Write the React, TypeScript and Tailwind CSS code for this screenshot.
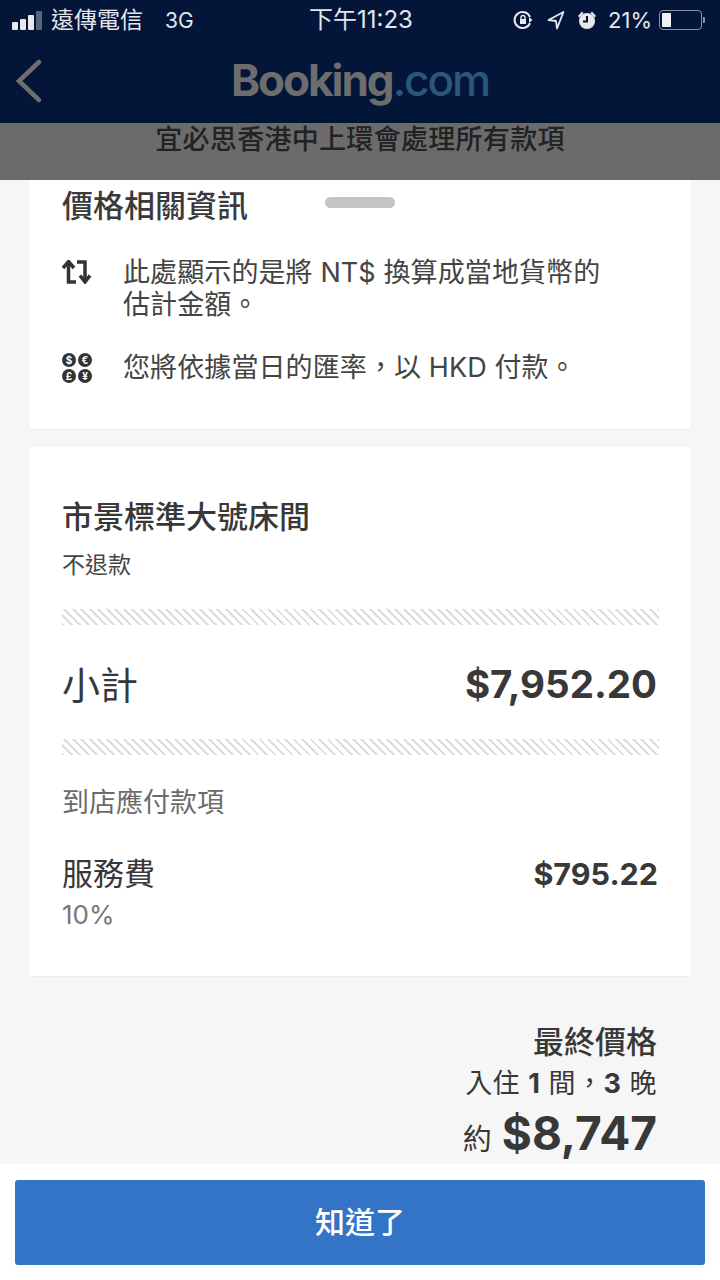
const Hatch = () => (
    <div className="h-4 bg-[repeating-linear-gradient(45deg,#dcdcdc_0px,#dcdcdc_2px,#ffffff_2px,#ffffff_6px)]" />
);

const StatusBar = () => (
    <div className="h-[40px] flex items-center justify-between pl-[12px] pr-[15px] text-[#e4e6eb] relative">
        <div className="flex items-center">
            <div className="flex items-end gap-[2px] h-[19px] w-[32px]">
                <div className="w-[6px] h-[8px] bg-[#e8e8ec] rounded-[1px]" />
                <div className="w-[6px] h-[11px] bg-[#e8e8ec] rounded-[1px]" />
                <div className="w-[6px] h-[15px] bg-[#e8e8ec] rounded-[1px]" />
                <div className="w-[6px] h-[19px] bg-[#5a6478] rounded-[1px]" />
            </div>
            <span className="ml-[7px] text-[23px] leading-none">遠傳電信</span>
            <span className="ml-[22px] text-[21px] leading-none">3G</span>
        </div>
        <div className="absolute left-[309px] top-[8px] text-[24px] leading-none">下午11:23</div>
        <div className="flex items-center">
            <svg width="22" height="22" viewBox="0 0 22 22" fill="none" stroke="#e8e8ec" strokeWidth="2">
                <path d="M18 14a8 8 0 1 1 0-6" />
                <path d="M17 8l3.500 3-3.500 3z" fill="#e8e8ec" stroke="none" />
                <rect x="8" y="10" width="6" height="5" fill="#e8e8ec" stroke="none" />
                <path d="M9 10V8.500a2 2 0 0 1 4 0V10" strokeWidth="1.400" />
            </svg>
            <svg className="ml-[13px]" width="18" height="20" viewBox="0 0 18 20" fill="none" stroke="#e8e8ec" strokeWidth="1.800">
                <path d="M16.500 2L1.500 10l7.500 1 1 7.500z" strokeLinejoin="round" />
            </svg>
            <svg className="ml-[12px]" width="20" height="20" viewBox="0 0 20 20" fill="#e8e8ec">
                <circle cx="10" cy="11" r="8" />
                <path d="M1 6l4-4.500 1.500 1.500-4 4.500z" />
                <path d="M19 6l-4-4.500-1.500 1.500 4 4.500z" />
                <path d="M10 6v5.500H6" stroke="#03163a" strokeWidth="2" fill="none" />
            </svg>
            <span className="ml-[11px] text-[22px] leading-none">21%</span>
            <div className="ml-[7px] w-[43px] h-[20px] border border-[#8a92a3] rounded-[4px] p-[2px]">
                <div className="w-[9px] h-full bg-[#f0f0f2] rounded-[1px]" />
            </div>
            <div className="ml-[1px] w-[2px] h-[6px] bg-[#8a92a3] rounded-r-[1px]" />
        </div>
    </div>
);

const NavBar = () => (
    <div className="h-[83px] relative flex items-center justify-center pb-[4px]">
        <svg className="absolute left-[14px] top-[18px]" width="30" height="46" viewBox="0 0 30 46" fill="none" stroke="#6e6e6e" strokeWidth="4.500" strokeLinecap="round">
            <path d="M25 4L5 23l20 19" />
        </svg>
        <div className="text-[44px] leading-none font-bold tracking-[-2px] text-[#6d6d6d]">
            Booking<span className="text-[#2b5878] font-medium">.com</span>
        </div>
    </div>
);

const CurrencyIcon = () => (
    <div className="grid grid-cols-2 gap-[2px] w-[30px] shrink-0">
        {["$", "€", "£", "¥"].map((c) => (
            <div key={c} className="size-[14px] rounded-full bg-[#333] text-white text-[10px] leading-[14px] font-bold text-center">
                {c}
            </div>
        ))}
    </div>
);

const SwapIcon = () => (
    <svg className="shrink-0 mt-[3px]" width="30" height="24" viewBox="0 0 30 24" fill="none" stroke="#333" strokeWidth="3.500">
        <path d="M6.500 3v19h7.500" />
        <path d="M1 8l5.500-6.500L12 8" />
        <path d="M15 2h8v19" />
        <path d="M18 15.500l5 6.500 5-6.500" />
    </svg>
);

const PriceInfoCard = () => (
    <div className="relative bg-white h-[250px] mx-[30px] px-[32px] border-b border-[#ececec]">
        <div className="text-[31px] leading-none font-medium pt-[10px] text-[#3a3a3a]">價格相關資訊</div>
        <div className="absolute left-[295px] top-[17px] w-[70px] h-[11px] rounded-full bg-[#c4c4c4]" />
        <div className="flex gap-[31px] mt-[36px]">
            <SwapIcon />
            <div className="text-[27px] leading-[32px] text-[#444] tracking-[0.100px]">
                此處顯示的是將 NT$ 換算成當地貨幣的
                <br />
                估計金額。
            </div>
        </div>
        <div className="flex items-center gap-[31px] mt-[31px]">
            <CurrencyIcon />
            <div className="text-[27px] leading-[32px] text-[#444] tracking-[0.100px]">您將依據當日的匯率，以 HKD 付款。</div>
        </div>
    </div>
);

const RoomCard = () => (
    <div className="bg-white h-[530px] mx-[30px] mt-[17px] px-[32px] border-b border-[#ececec]">
        <div className="text-[31px] leading-none font-medium pt-[54px] text-[#383838]">市景標準大號床間</div>
        <div className="text-[23px] leading-none mt-[22px] text-[#444]">不退款</div>
        <div className="mt-[32px] -mr-[1px]">
            <Hatch />
        </div>
        <div className="flex justify-between items-center h-[114px] pr-[1px] pt-[6px]">
            <span className="text-[38px] text-[#383838]">小計</span>
            <span className="text-[38.500px] font-bold text-[#383838]">$7,952.20</span>
        </div>
        <div className="-mr-[1px]">
            <Hatch />
        </div>
        <div className="text-[27px] leading-none mt-[34px] text-[#6b6b6b]">到店應付款項</div>
        <div className="flex justify-between mt-[38px]">
            <span className="text-[31px] leading-[40px] text-[#383838]">服務費</span>
            <span className="text-[30.500px] leading-[40px] font-bold text-[#383838]">$795.22</span>
        </div>
        <div className="text-[26px] leading-none mt-[8px] text-[#777]">10%</div>
    </div>
);

const Summary = () => (
    <div className="flex flex-col items-end pr-[63px] mt-[49px] text-[#383838]">
        <div className="text-[31px] leading-none font-medium">最終價格</div>
        <div className="text-[27px] leading-none mt-[13px] tracking-[0.500px]">
            入住 <b>1</b> 間，<b>3</b> 晚
        </div>
        <div className="flex items-baseline mt-[13px]">
            <span className="text-[29px] leading-none mr-[10px]">約</span>
            <span className="text-[46px] leading-none font-bold">$8,747</span>
        </div>
    </div>
);

export default function App() {
    return (
        <div className="w-[720px] h-[1280px] overflow-hidden flex flex-col bg-[#f6f6f6] font-['Inter','Noto_Sans_CJK_TC',sans-serif]">
            <div className="bg-[#03163a]">
                <StatusBar />
                <NavBar />
            </div>
            <div className="h-[57px] bg-[#6b6b6b] text-center text-[27px] leading-[32px] font-medium text-[#222] pt-[1px] tracking-[0.300px]">
                宜必思香港中上環會處理所有款項
            </div>
            <div className="flex-1 min-h-0 overflow-hidden">
                <PriceInfoCard />
                <RoomCard />
                <Summary />
            </div>
            <div className="h-[116px] bg-white pt-[16px] px-[15px] shrink-0">
                <div className="h-[85px] bg-[#3374c6] rounded-[3px] flex items-center justify-center text-white text-[30px] font-medium">知道了</div>
            </div>
        </div>
    );
}
